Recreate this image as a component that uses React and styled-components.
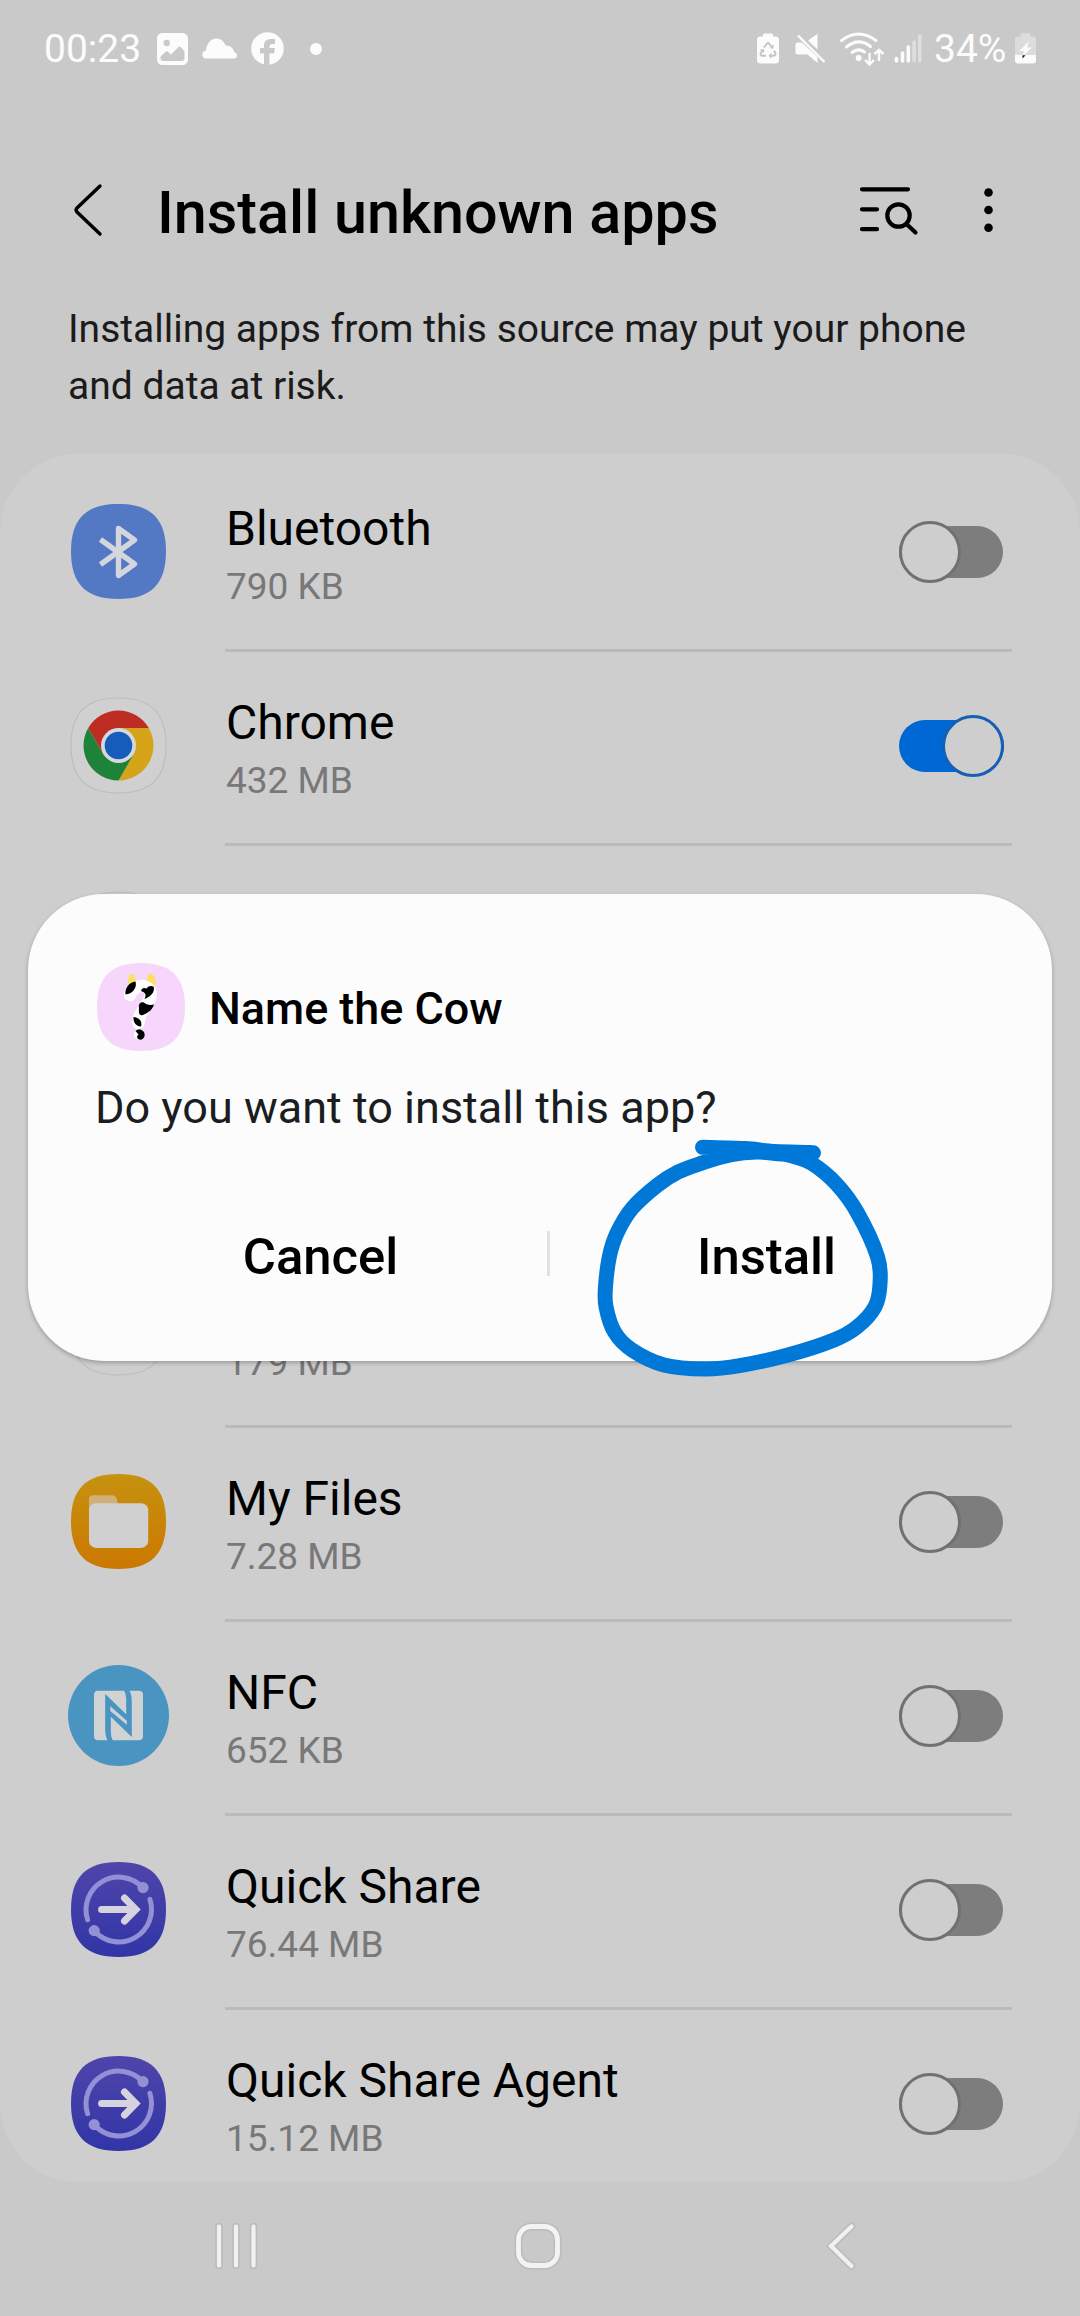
import React from "react";
import styled, { createGlobalStyle } from "styled-components";

const GlobalStyle = createGlobalStyle`
  * { box-sizing: border-box; }
  body { margin: 0; background: #c9c9c9; }
`;

const Screen = styled.div`
  position: relative;
  display: flex;
  flex-direction: column;
  width: 1080px;
  height: 2316px;
  overflow: hidden;
  background: #c9c9c9;
  color: #000;
  font-family: Roboto, "Liberation Sans", sans-serif;
  svg { display: block; flex: none; overflow: visible; }
`;

const StatusBar = styled.header`
  display: flex;
  justify-content: space-between;
  align-items: center;
  height: 97px;
  padding: 0 44px;
  color: #fcfcfc;
  font-size: 39px;
  line-height: 46px;
`;

const StatusGroup = styled.div`
  display: flex;
  align-items: center;
  gap: ${(p) => p.$gap}px;
`;

const Clock = styled.span`
  width: 99px;
  white-space: nowrap;
`;

const Percent = styled.span`
  width: 76px;
  white-space: nowrap;
`;

const MoreDot = styled.i`
  width: 12px;
  height: 12px;
  margin-left: 12px;
  border-radius: 50%;
  background: #fcfcfc;
`;

const TitleBar = styled.div`
  display: flex;
  align-items: center;
  height: 120px;
  margin-top: 53px;
  padding: 0 87px 0 74px;
`;

const Title = styled.h1`
  flex: 1;
  margin: 6px 0 0 55px;
  font-size: 59.300px;
  font-weight: 500;
  line-height: 70px;
  white-space: nowrap;
`;

const TitleActions = styled.div`
  display: flex;
  align-items: center;
  gap: 66px;
`;

const Description = styled.p`
  height: 184px;
  margin: 0;
  padding: 31px 69px 0 68px;
  color: #1b1b1b;
  font-size: 39px;
  line-height: 57px;
`;

const List = styled.main`
  height: 1728px;
  padding-top: 4px;
  overflow: hidden;
  border-radius: 78px;
  background: #cecece;
`;

const Row = styled.div`
  display: flex;
  height: 194px;
  padding: 0 68px 0 67px;
`;

const IconSlot = styled.div`
  display: flex;
  align-items: center;
  justify-content: center;
  width: 103px;
  height: 187px;
  margin-right: 55px;
`;

const RowBody = styled.div`
  display: flex;
  flex: 1;
  justify-content: space-between;
  padding: 0 8px 0 1px;
  border-bottom: 3px solid #bababa;
`;

const RowText = styled.div`
  display: flex;
  flex-direction: column;
  gap: 8px;
  padding-top: 43px;
`;

const AppName = styled.span`
  height: 56px;
  font-size: 48px;
  line-height: 56px;
  white-space: nowrap;
`;

const AppSize = styled.span`
  color: #787878;
  font-size: 37px;
  line-height: 44px;
  white-space: nowrap;
`;

const Switch = styled.div`
  display: flex;
  align-items: center;
  justify-content: ${(p) => (p.$on ? "flex-end" : "flex-start")};
  width: ${(p) => (p.$on ? 105 : 104)}px;
  height: 52px;
  margin: 68px ${(p) => (p.$on ? 0 : 1)}px 0 0;
  border-radius: 26px;
  background: ${(p) => (p.$on ? "#0068d4" : "#7d7d7d")};
`;

const Knob = styled.i`
  flex: none;
  width: 62px;
  height: 62px;
  border: 3px solid ${(p) => (p.$on ? "#1560b4" : "#717171")};
  border-radius: 50%;
  background: #cecece;
`;

const NavBar = styled.nav`
  display: flex;
  align-items: center;
  height: 128px;
  padding-left: 214px;
`;

const HomeKey = styled.svg`
  margin: 0 264px 0 257px;
`;

const Dialog = styled.section`
  position: absolute;
  top: 894px;
  left: 28px;
  display: flex;
  flex-direction: column;
  width: 1024px;
  height: 467px;
  padding: 69px 69px 0;
  border-radius: 76px;
  background: #fcfcfc;
  box-shadow: 0 2px 4px rgba(0, 0, 0, 0.25);
`;

const DialogHead = styled.div`
  display: flex;
  align-items: center;
  gap: 24px;
  height: 88px;
`;

const DialogTitle = styled.h2`
  margin: 3px 0 0;
  font-size: 44.900px;
  font-weight: 500;
  line-height: 52px;
  white-space: nowrap;
`;

const DialogMessage = styled.p`
  margin: 31px 0 0 -2px;
  color: #1b1d1f;
  font-size: 45px;
  line-height: 52px;
  white-space: nowrap;
`;

const DialogButtons = styled.div`
  display: flex;
  align-items: center;
  margin-top: 86px;
  height: 70px;
`;

const DialogButton = styled.button`
  width: ${(p) => p.$width}px;
  margin: 4px 0 0;
  padding: 0;
  border: 0;
  background: none;
  color: #000;
  font: 500 50.800px/58px Roboto, "Liberation Sans", sans-serif;
`;

const ButtonDivider = styled.i`
  width: 3px;
  height: 45px;
  margin: -3px 0 0 3px;
  background: #e1e1e1;
`;

const Scribble = styled.svg`
  position: absolute;
  top: 1130px;
  left: 590px;
`;

const SQUIRCLE =
  "M47.5 0C80 0 95 15 95 47.5S80 95 47.5 95 0 80 0 47.5 15 0 47.5 0Z";

function AppTile({ fill, stroke, size = 95, children }) {
  return (
    <svg width={size} height={size} viewBox="0 0 95 95">
      <path d={SQUIRCLE} fill={fill} stroke={stroke} strokeWidth="1.2" />
      {children}
    </svg>
  );
}

function BluetoothIcon() {
  return (
    <AppTile fill="#5379c5">
      <path
        d="M29.5 35.5 63.5 60 47.5 71.5V24.5L63.5 36 29.5 60.5"
        fill="none"
        stroke="#d3d6dc"
        strokeWidth="5.4"
        strokeLinejoin="round"
      />
    </AppTile>
  );
}

function ChromeIcon() {
  return (
    <AppTile fill="#d0d0d0" stroke="#bdbdbd">
      <path d="M17.2 30A35 35 0 0 1 77.8 30H47.5L32.3 56.25Z" fill="#be2d24" />
      <path d="M77.8 30A35 35 0 0 1 47.5 82.5L62.7 56.25 47.5 30Z" fill="#d5a419" />
      <path d="M47.5 82.5A35 35 0 0 1 17.2 30L32.3 56.25H62.7Z" fill="#1e8238" />
      <circle cx="47.5" cy="47.5" r="17.5" fill="#d5d8dc" />
      <circle cx="47.5" cy="47.5" r="13.8" fill="#165cbb" />
    </AppTile>
  );
}

function BlankIcon() {
  return <AppTile fill="#cecece" stroke="#bdbdbd" />;
}

function FilesIcon() {
  return (
    <AppTile fill="url(#filesFill)">
      <defs>
        <linearGradient id="filesFill" x1="0" y1="0" x2="0" y2="1">
          <stop offset="0" stopColor="#c69210" />
          <stop offset="1" stopColor="#cb7800" />
        </linearGradient>
      </defs>
      <path d="M18 40V25Q18 21.3 22 21.3H41Q44.500 21.300 45.500 24.500L47 30 40 40Z" fill="#d0b078" />
      <rect x="18" y="29.300" width="59.200" height="44.600" rx="7" fill="#d0d0d0" />
    </AppTile>
  );
}

function NfcIcon() {
  return (
    <svg width="101" height="101" viewBox="0 0 101 101">
      <circle cx="50.5" cy="50.5" r="50.5" fill="#4994c0" />
      <g fill="#d0d2d4">
        <path d="M30 25.700H56.200Q58.200 29 58.200 34V49.200L37.200 29V64Q37.200 71 39.400 75.300H30Q26 75.300 26 71.300V29.700Q26 25.700 30 25.700Z" />
        <path d="M71 75.300H44.800Q42.800 72 42.800 67V51.800L63.800 72V37Q63.800 30 61.600 25.700H71Q75 25.700 75 29.700V71.300Q75 75.300 71 75.300Z" />
        <path d="M42.300 41.200 58.800 55.800V59.800L42.300 46Z" />
      </g>
    </svg>
  );
}

function QuickShareIcon() {
  return (
    <AppTile fill="url(#shareFill)">
      <defs>
        <linearGradient id="shareFill" x1="0" y1="0" x2="0" y2="1">
          <stop offset="0" stopColor="#4f45ab" />
          <stop offset="1" stopColor="#3135a6" />
        </linearGradient>
      </defs>
      <g fill="none" stroke="#9490d5" strokeWidth="5" strokeLinecap="round">
        <path d="M16.600 57.700A32.600 32.600 0 0 1 71.500 25.500" />
        <path d="M78.900 37.300A32.600 32.600 0 0 1 23.500 69" />
      </g>
      <circle cx="72" cy="25.600" r="5.600" fill="#9490d5" />
      <circle cx="23.200" cy="68.600" r="5.600" fill="#9490d5" />
      <path
        d="M30.600 47.500H63M53.500 36 64.800 47.500 53.500 59"
        fill="none"
        stroke="#d5d4de"
        strokeWidth="7"
        strokeLinecap="round"
        strokeLinejoin="miter"
      />
    </AppTile>
  );
}

function CowIcon() {
  return (
    <svg width="88" height="88" viewBox="0 0 88 88">
      <path
        d="M44 0C74 0 88 14 88 44S74 88 44 88 0 74 0 44 14 0 44 0Z"
        fill="#f6d6fb"
      />
      <path
        d="M33 32C36 21 54 19 53.500 32 53 43 42 46 41.500 60"
        fill="none"
        stroke="#fff"
        strokeWidth="12.500"
        strokeLinecap="round"
      />
      <circle cx="42" cy="71.500" r="5" fill="#fff" />
      <path d="M31 21Q31 12 34.500 10.500 38.500 12 38.500 18.500ZM50 17.500Q50 12 53 10.500 59 11 59 22.500Z" fill="#fbe05a" />
      <g fill="#000">
        <path d="M38.500 18.500C40.500 25 35 31 28.500 31.500 27.500 25.500 32 19 38.500 18.500Z" />
        <path d="M44 28Q45 24 49.500 25.500 52 22 56.500 23.500C58.500 28 54 34 47.500 36Q51 30 44 28Z" />
        <path d="M42 45C41 40 45 37.500 49 41Q53 42.500 57 41.500C55 48 50 50 46 52 42 53.500 41.500 49 42 45Z" />
        <path d="M36.500 54C41 54 46 58 44 63.500 39 63.500 36 59 36.500 54Z" />
        <path d="M38.500 68Q42 64.500 46 68C49.500 71.500 47 77 43 76.700 39.500 76 39.500 73 41.500 71.500Z" />
      </g>
    </svg>
  );
}

const APPS = [
  { name: "Bluetooth", size: "790 KB", icon: <BluetoothIcon /> },
  { name: "Chrome", size: "432 MB", icon: <ChromeIcon />, on: true },
  { name: "", size: "", icon: <BlankIcon /> },
  { name: "", size: "", icon: <BlankIcon /> },
  { name: "", size: "179 MB", icon: <BlankIcon /> },
  { name: "My Files", size: "7.28 MB", icon: <FilesIcon /> },
  { name: "NFC", size: "652 KB", icon: <NfcIcon /> },
  { name: "Quick Share", size: "76.44 MB", icon: <QuickShareIcon /> },
  { name: "Quick Share Agent", size: "15.12 MB", icon: <QuickShareIcon /> },
];

function AppRow({ app }) {
  return (
    <Row>
      <IconSlot>{app.icon}</IconSlot>
      <RowBody>
        <RowText>
          <AppName>{app.name}</AppName>
          <AppSize>{app.size}</AppSize>
        </RowText>
        <Switch $on={app.on}>
          <Knob $on={app.on} />
        </Switch>
      </RowBody>
    </Row>
  );
}

function StatusLeft() {
  return (
    <StatusGroup $gap={14}>
      <Clock>00:23</Clock>
      <svg width="31" height="32" viewBox="0 0 31 32">
        <rect width="31" height="32" rx="5.500" fill="#fcfcfc" />
        <circle cx="9.700" cy="10" r="3.200" fill="#c9c9c9" />
        <path d="M3.500 23.500 9 18.500Q10 17.800 11 18.700L14 21.500 21.500 14Q22.700 13 24 14.300L27.500 18.500V25Q27.500 28 24.500 28H6.500Q3.500 28 3.500 25Z" fill="#c9c9c9" />
      </svg>
      <svg width="35" height="22" viewBox="0 0 35 22">
        <path d="M4 20.500C-.5 20.500-1.500 13.500 4 12.500 4.500 5 9.500.5 14.500.5 19 .5 22 3.500 23.500 7.500 28.500 7.500 31.500 10 32 14 36 15 36 20.500 32 20.500Z" fill="#fcfcfc" />
      </svg>
      <svg width="33" height="33" viewBox="0 0 33 33">
        <circle cx="16.500" cy="16.500" r="16.300" fill="#fcfcfc" />
        <path d="M13 33V21.500H9V16H13V13.500Q13 7 19.500 7H24V12H21Q18.500 12 18.500 14.500V16H24L23 21.500H18.500V33Z" fill="#c9c9c9" />
      </svg>
      <MoreDot />
    </StatusGroup>
  );
}

function StatusRight() {
  return (
    <StatusGroup $gap={11}>
      <svg width="27" height="31" viewBox="0 0 27 31">
        <path d="M6 3.500V2Q6 .5 7.500 .5H14.500Q16 .5 16 2V3.500H18.500Q22 3.500 22 7V27Q22 30.500 18.500 30.500H3.500Q0 30.500 0 27V7Q0 3.500 3.500 3.500Z" fill="#fcfcfc" />
        <g fill="none" stroke="#c4c4c4" strokeWidth="1.900">
          <path d="M7 14.500 10 10.500Q11 9.500 12 10.500L15 14.500M17 17.500 18.500 20.500Q18.500 22.500 16.500 22.800H13M9 22.800H5.500Q3.500 22.500 3.500 20.500L6 17" />
          <path d="M13.500 14.800H16V11.500M14.500 20.500 12.500 22.800 14.500 25M3.500 17H6.500V19.500" strokeWidth="1.300" />
        </g>
      </svg>
      <svg width="33" height="31" viewBox="0 0 33 31">
        <path d="M.5 11.500Q.5 9.500 2.500 9.500H7L22.500 24V30L12.500 21.500H2.500Q.5 21.500 .5 19.500ZM13 7.500 22.500 .8V16.500Z" fill="#fcfcfc" />
        <path d="M3 2.500 29.500 29" stroke="#fcfcfc" strokeWidth="2.400" />
      </svg>
      <svg width="45" height="34" viewBox="0 0 45 34">
        <g fill="none" stroke="#fcfcfc" strokeWidth="3" strokeLinecap="round">
          <path d="M2.500 8.500Q19.500-4.500 37 8.500M7.500 15Q19.500 5 31.500 14.500M13 20.500Q19.500 15.500 25.500 20" />
        </g>
        <circle cx="19.700" cy="26" r="3" fill="#fcfcfc" />
        <path d="M30.500 21V32M26 28 30.500 32.500 35 28M40 29V18.500M35.500 22 40 17.800 44.500 22" fill="none" stroke="#fcfcfc" strokeWidth="2.400" />
      </svg>
      <svg width="28" height="29" viewBox="0 0 28 29">
        <g stroke="#fcfcfc" strokeWidth="3.600" strokeLinecap="round">
          <path d="M1.500 24.500V27M7.500 19V27M13.300 13V27" />
          <path d="M19.100 8V27M24.800 2V27" opacity=".42" />
        </g>
      </svg>
      <StatusGroup $gap={5}>
        <Percent>34%</Percent>
        <svg width="21" height="31" viewBox="0 0 21 31">
          <path d="M5.500 3.500V1.500Q5.500 .3 6.700 .3H14.300Q15.500 .3 15.500 1.500V3.500H18Q21 3.500 21 6.500V22H0V6.500Q0 3.500 3 3.500Z" fill="#dcdcdc" />
          <path d="M0 22H21V27.500Q21 30.500 18 30.500H3Q0 30.500 0 27.500Z" fill="#fcfcfc" />
          <path d="M13 9 4.500 18H9L7.500 24 16.500 14.500H12L13.500 9.500Z" fill="#fcfcfc" />
          <path d="M7.500 22.300H10.500L7.500 25.500Z" fill="#111" />
        </svg>
      </StatusGroup>
    </StatusGroup>
  );
}

// Points of the hand-drawn loop around the Install button.
const LOOP = [
  [702.5, 1147.3], [745, 1148.500], [775, 1151.500], [810, 1152.5], [809, 1153.5], [783, 1154],
  [757, 1152], [730, 1155], [702, 1163], [678, 1172], [657, 1185.500], [632, 1208.500], [617, 1233],
  [609.500, 1256], [605.500, 1286.700], [606, 1306.700], [614.500, 1332],
  [632, 1350], [664, 1365], [705.300, 1369], [739.700, 1365.700], [788, 1355],
  [834, 1340], [857, 1327], [875, 1306.700], [880, 1284], [877.500, 1256.700],
  [857, 1212], [836, 1183.500], [812, 1163.500], [794, 1156.5], [776, 1152.8],
];

function smoothPath(points) {
  const at = (i) => points[Math.max(0, Math.min(points.length - 1, i))];
  let d = `M${points[0]}`;
  for (let i = 0; i < points.length - 1; i++) {
    const [a, b, c, e] = [at(i - 1), at(i), at(i + 1), at(i + 2)];
    const c1 = [b[0] + (c[0] - a[0]) / 6, b[1] + (c[1] - a[1]) / 6];
    const c2 = [c[0] - (e[0] - b[0]) / 6, c[1] - (e[1] - b[1]) / 6];
    d += `C${c1} ${c2} ${c}`;
  }
  return d;
}

export default function App() {
  return (
    <Screen>
      <GlobalStyle />
      <StatusBar>
        <StatusLeft />
        <StatusRight />
      </StatusBar>
      <TitleBar>
        <svg width="28" height="52" viewBox="0 0 28 52">
          <path d="M26 2 3 24Q1.200 26 3 28L26 50" fill="none" stroke="#000" strokeWidth="3.400" strokeLinecap="round" />
        </svg>
        <Title>Install unknown apps</Title>
        <TitleActions>
          <svg width="58" height="48" viewBox="0 -1 58 48">
            <g fill="none" stroke="#000" strokeWidth="4.200" strokeLinecap="round">
              <path d="M2 2.300H48M2 22.300H17M2 42.200H17" />
              <circle cx="38.500" cy="28.500" r="11.200" />
              <path d="M47 37.500 55.500 45.500" />
            </g>
          </svg>
          <svg width="9" height="44" viewBox="0 0 9 44">
            <circle cx="4.500" cy="4.500" r="4.300" />
            <circle cx="4.500" cy="22" r="4.300" />
            <circle cx="4.500" cy="39.700" r="4.300" />
          </svg>
        </TitleActions>
      </TitleBar>
      <Description>
        Installing apps from this source may put your phone and data at risk.
      </Description>
      <List>
        {APPS.map((app, i) => (
          <AppRow key={i} app={app} />
        ))}
      </List>
      <NavBar>
        <svg width="44" height="46" viewBox="0 0 44 46">
          <g strokeLinecap="round">
            <path d="M5 3.500V42.500M22 3.500V42.500M39.500 3.500V42.500" stroke="#bcbcbc" strokeWidth="7.500" />
            <path d="M5 3.500V42.500M22 3.500V42.500M39.500 3.500V42.500" stroke="#f1f1f1" strokeWidth="4.200" />
          </g>
        </svg>
        <HomeKey width="46" height="46" viewBox="0 0 46 46">
          <g fill="none">
            <rect x="3.500" y="3.500" width="39" height="39" rx="13" stroke="#bcbcbc" strokeWidth="8" />
            <rect x="3.500" y="3.500" width="39" height="39" rx="13" stroke="#f3f3f3" strokeWidth="4.800" />
          </g>
        </HomeKey>
        <svg width="28" height="46" viewBox="0 0 28 46">
          <g fill="none" strokeLinecap="round">
            <path d="M26.500 3.500 6 23 26.500 43" stroke="#bcbcbc" strokeWidth="7.500" />
            <path d="M26.500 3.500 6 23 26.500 43" stroke="#f1f1f1" strokeWidth="4.200" />
          </g>
        </svg>
      </NavBar>
      <Dialog>
        <DialogHead>
          <CowIcon />
          <DialogTitle>Name the Cow</DialogTitle>
        </DialogHead>
        <DialogMessage>Do you want to install this app?</DialogMessage>
        <DialogButtons>
          <DialogButton $width={447}>Cancel</DialogButton>
          <ButtonDivider />
          <DialogButton $width={433}>Install</DialogButton>
        </DialogButtons>
      </Dialog>
      <Scribble width="310" height="260" viewBox="590 1130 310 260">
        <path d={smoothPath(LOOP)} fill="none" stroke="#0078d8" strokeWidth="15" strokeLinecap="round" strokeLinejoin="round" />
      </Scribble>
    </Screen>
  );
}
